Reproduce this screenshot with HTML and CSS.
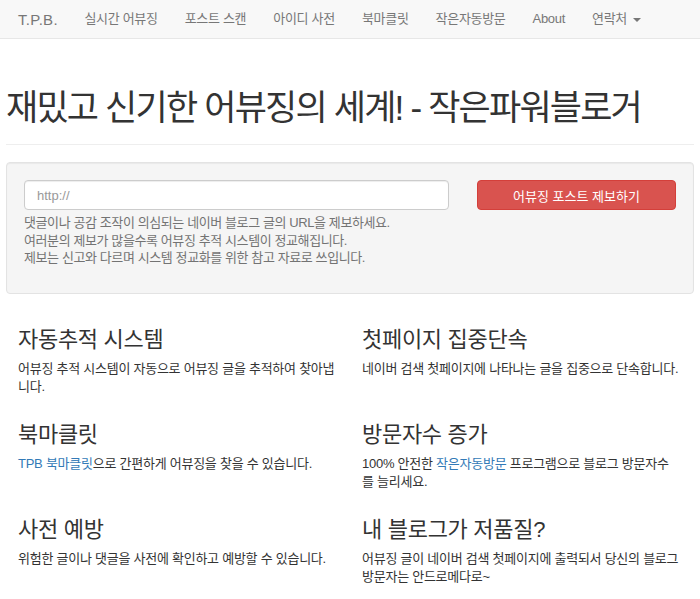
FILE: index.html
```html
<!DOCTYPE html>
<html lang="ko">
<head>
    <meta charset="UTF-8">
    <meta name="viewport" content="width=device-width, initial-scale=1.0">
    <title>T.P.B. - 작은파워블로거</title>
    <link rel="stylesheet" href="styles.css">
</head>
<body>
    <nav class="navbar">
        <a class="brand" href="#">T.P.B.</a>
        <ul class="nav">
            <li><a href="#">실시간 어뷰징</a></li>
            <li><a href="#">포스트 스캔</a></li>
            <li><a href="#">아이디 사전</a></li>
            <li><a href="#">북마클릿</a></li>
            <li><a href="#">작은자동방문</a></li>
            <li><a href="#">About</a></li>
            <li><a href="#">연락처 <span class="caret"></span></a></li>
        </ul>
    </nav>

    <div class="container">
        <div class="page-header">
            <h1>재밌고 신기한 어뷰징의 세계! - 작은파워블로거</h1>
        </div>

        <div class="well">
            <div class="report-form">
                <div class="report-input">
                    <input type="text" placeholder="http://">
                    <p class="help-block">
                        댓글이나 공감 조작이 의심되는 네이버 블로그 글의 URL을 제보하세요.<br>
                        여러분의 제보가 많을수록 어뷰징 추적 시스템이 정교해집니다.<br>
                        제보는 신고와 다르며 시스템 정교화를 위한 참고 자료로 쓰입니다.
                    </p>
                </div>
                <button class="btn-danger">어뷰징 포스트 제보하기</button>
            </div>
        </div>

        <div class="features">
            <div class="feature">
                <h2>자동추적 시스템</h2>
                <p>어뷰징 추적 시스템이 자동으로 어뷰징 글을 추적하여 찾아냅니다.</p>
            </div>
            <div class="feature">
                <h2>첫페이지 집중단속</h2>
                <p>네이버 검색 첫페이지에 나타나는 글을 집중으로 단속합니다.</p>
            </div>
            <div class="feature">
                <h2>북마클릿</h2>
                <p><a href="#">TPB 북마클릿</a>으로 간편하게 어뷰징을 찾을 수 있습니다.</p>
            </div>
            <div class="feature">
                <h2>방문자수 증가</h2>
                <p>100% 안전한 <a href="#">작은자동방문</a> 프로그램으로 블로그 방문자수를 늘리세요.</p>
            </div>
            <div class="feature">
                <h2>사전 예방</h2>
                <p>위험한 글이나 댓글을 사전에 확인하고 예방할 수 있습니다.</p>
            </div>
            <div class="feature">
                <h2>내 블로그가 저품질?</h2>
                <p>어뷰징 글이 네이버 검색 첫페이지에 출력되서 당신의 블로그 방문자는 안드로메다로~</p>
            </div>
        </div>
    </div>
</body>
</html>
```

FILE: styles.css
```css
body {
    margin: 0;
    font-family: "Liberation Sans", "Noto Sans CJK KR", sans-serif;
    font-size: 13px;
    color: #333;
    background-color: #fff;
}
a {
    color: #337ab7;
    text-decoration: none;
}

/* navbar */
.navbar {
    display: flex;
    align-items: center;
    height: 38px;
    padding-left: 18px;
    background-color: #f8f8f8;
    border-bottom: 1px solid #e7e7e7;
}
.brand {
    font-size: 15px;
    letter-spacing: 0.3px;
    color: #777;
    margin-right: 13px;
}
.nav {
    display: flex;
    list-style: none;
    margin: 0;
    padding: 0;
}
.nav a {
    display: block;
    padding: 0 13.5px;
    color: #777;
    font-size: 13px;
    letter-spacing: -0.3px;
    line-height: 38px;
}
.caret {
    display: inline-block;
    width: 0;
    height: 0;
    margin-left: 3px;
    vertical-align: middle;
    border-top: 4px solid #777;
    border-left: 4px solid transparent;
    border-right: 4px solid transparent;
}

/* content */
.container {
    padding: 0 6px;
}
.page-header {
    margin-top: 47px;
    padding-bottom: 14px;
    border-bottom: 1px solid #eee;
}
h1 {
    margin: 0;
    font-size: 35px;
    font-weight: 400;
    line-height: 44px;
    letter-spacing: -1.8px;
}

.well {
    margin-top: 17px;
    padding: 17px;
    background-color: #f5f5f5;
    border: 1px solid #e3e3e3;
    border-radius: 4px;
    box-shadow: inset 0 1px 1px rgba(0, 0, 0, 0.05);
}
.report-form {
    display: grid;
    grid-template-columns: 1fr 199px;
    gap: 28px;
    align-items: start;
}
.report-form input {
    display: block;
    width: 100%;
    height: 30px;
    padding: 0 12px;
    box-sizing: border-box;
    border: 1px solid #ccc;
    border-radius: 4px;
    box-shadow: inset 0 1px 1px rgba(0, 0, 0, 0.075);
    font-family: inherit;
    font-size: 13px;
    color: #555;
}
.report-form input::placeholder {
    color: #999;
}
.help-block {
    margin: 4px 0 9px;
    color: #737373;
    font-size: 13px;
    line-height: 17.5px;
    letter-spacing: -0.4px;
}
.btn-danger {
    height: 30px;
    color: #fff;
    background-color: #d9534f;
    border: 1px solid #d43f3a;
    border-radius: 4px;
    font-family: inherit;
    font-size: 13px;
    cursor: pointer;
}

.features {
    display: grid;
    grid-template-columns: 320px 317px;
    column-gap: 24px;
    row-gap: 26px;
    margin-top: 33px;
    padding: 0 12px;
}
.feature h2 {
    margin: 0 0 7px;
    font-size: 22px;
    font-weight: 400;
    line-height: 26px;
    letter-spacing: -0.3px;
}
.feature p {
    margin: 0;
    line-height: 18px;
    letter-spacing: -0.25px;
}
```
